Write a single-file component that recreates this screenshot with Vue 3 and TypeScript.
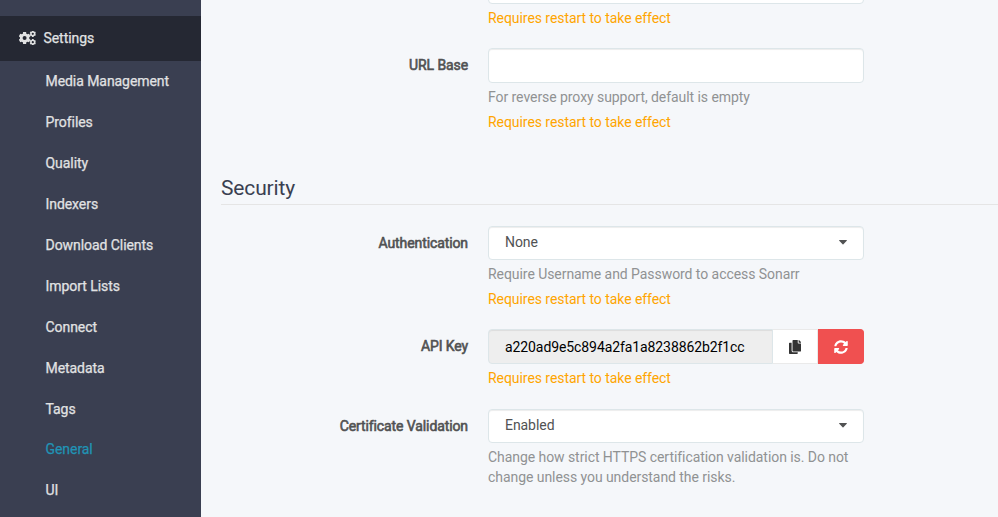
<script setup lang="ts">
interface Field {
  id: string
  label: string
  kind: 'text' | 'select' | 'key'
  value: string
  help?: string
  restart?: boolean
}

const links: string[] = [
  'Media Management', 'Profiles', 'Quality', 'Indexers', 'Download Clients',
  'Import Lists', 'Connect', 'Metadata', 'Tags', 'General', 'UI',
]
const current = 'General'
const warning = 'Requires restart to take effect'

const hostFields: Field[] = [
  { id: 'port', label: '', kind: 'text', value: '', restart: true },
  { id: 'base', label: 'URL Base', kind: 'text', value: '', help: 'For reverse proxy support, default is empty', restart: true },
]
const securityFields: Field[] = [
  { id: 'auth', label: 'Authentication', kind: 'select', value: 'None', help: 'Require Username and Password to access Sonarr', restart: true },
  { id: 'api', label: 'API Key', kind: 'key', value: 'a220ad9e5c894a2fa1a8238862b2f1cc', restart: true },
  { id: 'cert', label: 'Certificate Validation', kind: 'select', value: 'Enabled', help: 'Change how strict HTTPS certification validation is. Do not change unless you understand the risks.' },
]
const groups = [
  { id: 'host', title: '', fields: hostFields },
  { id: 'security', title: 'Security', fields: securityFields },
]

// Closed outline of a gear: teeth alternate between outer and inner radius.
function gear(cx: number, cy: number, outer: number, inner: number, hole: number, teeth: number): string {
  const step = (Math.PI * 2) / teeth
  const points: string[] = []
  for (let i = 0; i < teeth; i++) {
    const a = (i + 0.5) * step
    const corners: [number, number][] = [[-0.36, inner], [-0.24, outer], [0.24, outer], [0.36, inner]]
    for (const [offset, r] of corners) {
      const t = a + offset * step
      points.push(`${(cx + r * Math.cos(t)).toFixed(2)} ${(cy + r * Math.sin(t)).toFixed(2)}`)
    }
  }
  return `M${points.join('L')}ZM${cx - hole} ${cy}a${hole} ${hole} 0 1 0 ${hole * 2} 0a${hole} ${hole} 0 1 0 ${-hole * 2} 0Z`
}
const gears = gear(5.6, 7, 6.1, 4.7, 2, 6) + gear(13.8, 2.8, 3.2, 2.6, 1.1, 6) + gear(13.8, 11.2, 3.2, 2.6, 1.1, 6)
</script>

<template>
  <div class="page">
    <nav class="sidebar">
      <div class="parent">
        <svg class="cogs" viewBox="0 0 18 14"><path :d="gears" fill="currentColor" fill-rule="evenodd" /></svg>
        <span>Settings</span>
      </div>
      <a v-for="link in links" :key="link" class="link" :class="{ active: link === current }">{{ link }}</a>
    </nav>
    <main class="content">
      <section v-for="group in groups" :key="group.id" class="group" :class="group.id">
        <h2 v-if="group.title" class="title">{{ group.title }}</h2>
        <div v-for="field in group.fields" :key="field.id" class="field" :class="field.id">
          <label class="label">{{ field.label }}</label>
          <div class="control">
            <div v-if="field.kind === 'text'" class="box"></div>
            <div v-else-if="field.kind === 'select'" class="box select">
              <span>{{ field.value }}</span>
              <svg class="caret" viewBox="0 0 8 5"><path d="M.6 0h6.8a.5.5 0 0 1 .36.85L4.4 4.3a.6.6 0 0 1-.8 0L.24.85A.5.5 0 0 1 .6 0Z" fill="currentColor" /></svg>
            </div>
            <div v-else class="key">
              <div class="box readonly">{{ field.value }}</div>
              <button class="button copy" type="button">
                <svg viewBox="0 0 448 512"><path fill="currentColor" d="M320 448v40c0 13.255-10.745 24-24 24H24c-13.255 0-24-10.745-24-24V120c0-13.255 10.745-24 24-24h72v296c0 30.879 25.121 56 56 56h168zm0-344V0H152c-13.255 0-24 10.745-24 24v368c0 13.255 10.745 24 24 24h272c13.255 0 24-10.745 24-24V128H344c-13.2 0-24-10.8-24-24zm120.971-31.029L375.029 7.029A24 24 0 0 0 358.059 0H352v96h96v-6.059a24 24 0 0 0-7.029-16.97z" /></svg>
              </button>
              <button class="button reset" type="button">
                <svg viewBox="0 0 512 512"><path fill="currentColor" d="M370.72 133.28C339.458 104.008 298.888 87.962 255.848 88c-77.458.068-144.328 53.178-162.791 126.85-1.344 5.363-6.122 9.15-11.651 9.15H24.103c-7.498 0-13.194-6.807-11.807-14.176C33.933 94.924 134.813 8 256 8c66.448 0 126.791 26.136 171.315 68.685L463.03 40.97C478.149 25.851 504 36.559 504 57.941V192c0 13.255-10.745 24-24 24H345.941c-21.382 0-32.09-25.851-16.971-40.971l41.75-41.749zM32 296h134.059c21.382 0 32.09 25.851 16.971 40.971l-41.75 41.75c31.262 29.273 71.835 45.319 114.876 45.28 77.418-.07 144.315-53.144 162.787-126.849 1.344-5.363 6.122-9.15 11.651-9.15h57.304c7.498 0 13.194 6.807 11.807 14.176C478.067 417.076 377.187 504 256 504c-66.448 0-126.791-26.136-171.315-68.685L48.97 471.03C33.851 486.149 8 475.441 8 454.059V320c0-13.255 10.745-24 24-24z" /></svg>
              </button>
            </div>
            <p v-if="field.help" class="help">{{ field.help }}</p>
            <p v-if="field.restart" class="help warn">{{ warning }}</p>
          </div>
        </div>
      </section>
    </main>
  </div>
</template>

<style>
body { margin: 0; overflow: hidden; }
</style>

<style scoped>
.page {
  display: flex;
  height: 517px;
  overflow: hidden;
  background: #f5f7fa;
  color: #515253;
  font: 14px/20px Roboto, sans-serif;
  letter-spacing: -0.06px;
}
.sidebar {
  flex: none;
  box-sizing: border-box;
  width: 201px;
  padding-top: 16px;
  background: #3a3f51;
  color: #e1e2e3;
  letter-spacing: -0.06px;
  -webkit-text-stroke: 0.25px currentColor;
}
.parent {
  display: flex;
  align-items: center;
  gap: 6.5px;
  box-sizing: border-box;
  height: 45px;
  padding: 0 0 1px 19px;
  background: #252833;
}
.cogs { width: 18px; height: 14px; }
.link {
  display: flex;
  align-items: center;
  height: 40.9px;
  padding-left: 45.5px;
}
.active { color: #2193b5; }
.content { flex: 1; padding-left: 20px; }
.host { display: flow-root; height: 174px; }
.port { margin-top: -31px; }
.base { margin-top: 20px; }
.title {
  box-sizing: border-box;
  height: 31px;
  margin: 0 0 21px;
  border-bottom: 1px solid #e5e5e5;
  color: #3a3f51;
  font-size: 21px;
  font-weight: 400;
  line-height: 28px;
  letter-spacing: -0.15px;
}
.field { display: flex; gap: 20px; }
.api { margin-top: 20px; }
.cert { margin-top: 21px; }
.label {
  width: 247px;
  padding-top: 7px;
  text-align: right;
  letter-spacing: -0.1px;
  -webkit-text-stroke: 0.6px currentColor;
}
.control { width: 376px; }
.box {
  box-sizing: border-box;
  height: 35px;
  border: 1px solid #dde6e9;
  border-radius: 4px;
  background: #fff;
  box-shadow: inset 0 1px 1px rgba(0, 0, 0, 0.075);
}
.select {
  display: flex;
  align-items: center;
  justify-content: space-between;
  height: 34px;
  padding: 0 16px 2px;
}
.caret { width: 8px; height: 5px; }
.key { display: flex; }
.readonly {
  flex: 1;
  padding: 7px 16px;
  border-radius: 4px 0 0 4px;
  background: #eee;
  color: #000;
  letter-spacing: -0.09px;
}
.button {
  display: flex;
  align-items: center;
  justify-content: center;
  box-sizing: border-box;
  height: 35px;
  padding: 0;
  border: 1px solid #eaeaea;
  border-left: 0;
}
.button svg { height: 14px; }
.copy { width: 45px; background: #fff; color: #333; }
.reset {
  width: 46px;
  border-color: #f05050;
  border-radius: 0 4px 4px 0;
  background: #f05050;
  color: #fff;
}
.help { margin: 4px 0 0; color: #909293; }
.help + .help { margin-top: 5px; }
.warn { color: #ffa500; }
</style>
